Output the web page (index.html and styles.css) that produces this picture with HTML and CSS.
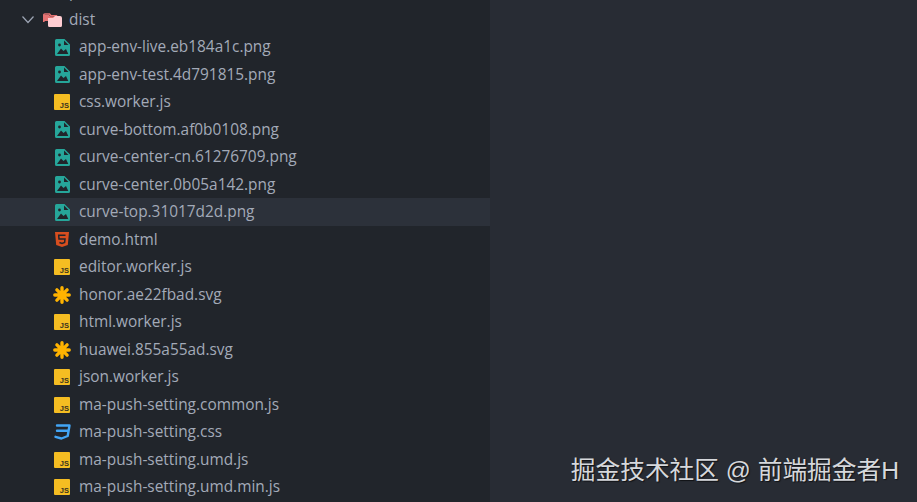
FILE: index.html
```html
<!DOCTYPE html>
<html lang="zh">
<head>
<meta charset="utf-8">
<title>Explorer</title>
<link rel="stylesheet" href="styles.css">
</head>
<body>
<svg class="defs" width="0" height="0">
  <defs>
    <symbol id="i-img" viewBox="0 0 15 17">
      <path fill="#26a69a" d="M1.500 0H9.500l5.500 5.500v10a1.500 1.500 0 0 1-1.500 1.500h-12A1.500 1.500 0 0 1 0 15.500v-14A1.500 1.500 0 0 1 1.500 0z"/>
      <path fill="#21252b" d="M9 1.500V6h4.500z"/>
      <path fill="#21252b" d="M2 15l4-5.500 2.500 2.500 2.500-2 2.300 5z"/>
      <circle fill="#21252b" cx="4.500" cy="6" r="1.400"/>
    </symbol>
    <symbol id="i-js" viewBox="0 0 16 16">
      <rect width="16" height="16" rx="1" fill="#f5bd22"/>
      <text x="15" y="14.300" text-anchor="end" class="js-label">JS</text>
    </symbol>
    <symbol id="i-star" viewBox="0 0 18 18">
      <path stroke="#ffb300" stroke-width="3.400" stroke-linecap="round" fill="none" d="M9 1.800v14.400M1.800 9h14.400M3.900 3.900l10.200 10.200M14.100 3.900L3.900 14.100"/>
    </symbol>
    <symbol id="i-html" viewBox="0 0 14 15">
      <path fill="#d84e1f" d="M0 0h14l-1.200 13L7 15l-5.800-2z"/>
      <path fill="none" stroke="#21252b" stroke-width="1.500" d="M10.500 3.300H3.700l.3 3.700h6l-.4 3.500L7 11.500l-2.600-1"/>
    </symbol>
    <symbol id="i-css" viewBox="0 0 17 16">
      <path fill="none" stroke="#42a5f5" stroke-width="2.400" stroke-linejoin="round" stroke-linecap="round" d="M3 1.500h12.500l-1.800 10.500L7.500 14.500l-6-1.700M3 6.800h10.800"/>
    </symbol>
  </defs>
</svg>
<main class="layout">
  <aside class="sidebar">
    <ul class="tree">
      <li class="row"><span class="clipped-name">public</span></li>
      <li class="row folder-row">
        <svg class="chevron" viewBox="0 0 12 8"><path d="M.5.500l5.500 6 5.500-6"/></svg>
        <svg class="folder" viewBox="0 0 19 14">
          <path fill="none" stroke="#e57373" stroke-width="1.600" d="M.8 9V2a1 1 0 0 1 1-1h4.700l1.500 1.700h6.200"/>
          <path fill="#e57373" d="M0 2h6l1.500 1.500H15V5H7L5 8H0z"/>
          <path fill="#ffcdd2" d="M5 5h5l2-2h5a2 2 0 0 1 2 2v7.500a1.500 1.500 0 0 1-1.500 1.500h-11A1.500 1.500 0 0 1 5 12.500z"/>
        </svg>
        <span class="name">dist</span>
      </li>
      <li class="row file"><span class="slot"><svg class="icon-img"><use href="#i-img"/></svg></span><span class="name">app-env-live.eb184a1c.png</span></li>
      <li class="row file"><span class="slot"><svg class="icon-img"><use href="#i-img"/></svg></span><span class="name">app-env-test.4d791815.png</span></li>
      <li class="row file"><span class="slot"><svg class="icon-js"><use href="#i-js"/></svg></span><span class="name">css.worker.js</span></li>
      <li class="row file"><span class="slot"><svg class="icon-img"><use href="#i-img"/></svg></span><span class="name">curve-bottom.af0b0108.png</span></li>
      <li class="row file"><span class="slot"><svg class="icon-img"><use href="#i-img"/></svg></span><span class="name">curve-center-cn.61276709.png</span></li>
      <li class="row file"><span class="slot"><svg class="icon-img"><use href="#i-img"/></svg></span><span class="name">curve-center.0b05a142.png</span></li>
      <li class="row file selected"><span class="slot"><svg class="icon-img"><use href="#i-img"/></svg></span><span class="name">curve-top.31017d2d.png</span></li>
      <li class="row file"><span class="slot"><svg class="icon-html"><use href="#i-html"/></svg></span><span class="name">demo.html</span></li>
      <li class="row file"><span class="slot"><svg class="icon-js"><use href="#i-js"/></svg></span><span class="name">editor.worker.js</span></li>
      <li class="row file"><span class="slot"><svg class="icon-star"><use href="#i-star"/></svg></span><span class="name">honor.ae22fbad.svg</span></li>
      <li class="row file"><span class="slot"><svg class="icon-js"><use href="#i-js"/></svg></span><span class="name">html.worker.js</span></li>
      <li class="row file"><span class="slot"><svg class="icon-star"><use href="#i-star"/></svg></span><span class="name">huawei.855a55ad.svg</span></li>
      <li class="row file"><span class="slot"><svg class="icon-js"><use href="#i-js"/></svg></span><span class="name">json.worker.js</span></li>
      <li class="row file"><span class="slot"><svg class="icon-js"><use href="#i-js"/></svg></span><span class="name">ma-push-setting.common.js</span></li>
      <li class="row file"><span class="slot"><svg class="icon-css"><use href="#i-css"/></svg></span><span class="name">ma-push-setting.css</span></li>
      <li class="row file"><span class="slot"><svg class="icon-js"><use href="#i-js"/></svg></span><span class="name">ma-push-setting.umd.js</span></li>
      <li class="row file"><span class="slot"><svg class="icon-js"><use href="#i-js"/></svg></span><span class="name">ma-push-setting.umd.min.js</span></li>
    </ul>
  </aside>
  <section class="editor">
    <p class="watermark">掘金技术社区 @ 前端掘金者H</p>
  </section>
</main>
</body>
</html>
```

FILE: styles.css
```css
html, body {
  margin: 0;
  height: 100%;
  overflow: hidden;
  background: #282c34;
}
.defs {
  position: absolute;
}
.js-label {
  font: 700 7.500px "Liberation Sans", sans-serif;
  fill: #3a3320;
}
.layout {
  display: flex;
  height: 502px;
  overflow: hidden;
}
.sidebar {
  flex: 0 0 490px;
  background: #21252b;
  overflow: hidden;
}
.tree {
  list-style: none;
  margin: -21.750px 0 0;
  padding: 0;
}
.row {
  height: 27.500px;
  display: flex;
  align-items: center;
  color: #a3aab8;
  font: 15.400px/27.500px "Open Sans", "Noto Sans", sans-serif;
  white-space: nowrap;
}
.clipped-name {
  margin-left: 69px;
}
.folder-row {
  padding-left: 22px;
}
.chevron {
  width: 12px;
  height: 8px;
  margin-right: 9px;
  fill: none;
  stroke: #9da5b4;
  stroke-width: 1.200;
}
.folder {
  width: 19px;
  height: 14px;
  margin-right: 7px;
}
.file {
  padding-left: 53px;
}
.slot {
  flex: none;
  width: 18px;
  height: 18px;
  margin-right: 8px;
  display: flex;
  align-items: center;
  justify-content: center;
}
.icon-img {
  width: 15px;
  height: 17px;
}
.icon-js {
  width: 16px;
  height: 16px;
}
.icon-star {
  width: 18px;
  height: 18px;
}
.icon-html {
  width: 14px;
  height: 15px;
}
.icon-css {
  width: 17px;
  height: 16px;
}
.selected {
  background: #2c313a;
}
.editor {
  flex: 1;
  position: relative;
  background: #282c34;
}
.watermark {
  position: absolute;
  right: 18px;
  bottom: 15px;
  margin: 0;
  color: #d6d8dc;
  font: 24.700px/32px "Liberation Sans", "Noto Sans CJK SC", sans-serif;
  text-shadow: 1px 1px 1px rgba(0, 0, 0, 0.6);
  white-space: nowrap;
}
```
